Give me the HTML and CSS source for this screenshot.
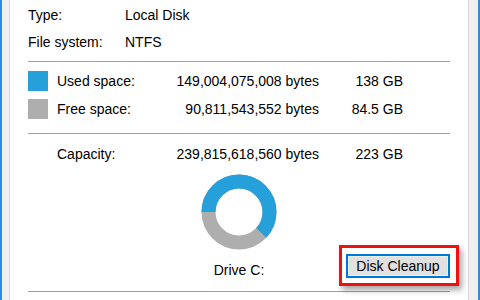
FILE: index.html
```html
<!DOCTYPE html>
<html>
<head>
<meta charset="utf-8">
<link rel="stylesheet" href="styles.css">
</head>
<body>
<div class="window">
  <div class="panel">
    <div class="info">
      <span>Type:</span><span>Local Disk</span>
      <span>File system:</span><span>NTFS</span>
    </div>
    <div class="sep sep-a"></div>
    <div class="usage">
      <span class="swatch used"></span><span>Used space:</span><span class="num">149,004,075,008 bytes</span><span class="num">138 GB</span>
      <span class="swatch free"></span><span>Free space:</span><span class="num">90,811,543,552 bytes</span><span class="num">84.5 GB</span>
    </div>
    <div class="sep sep-b"></div>
    <div class="usage capacity">
      <span></span><span>Capacity:</span><span class="num">239,815,618,560 bytes</span><span class="num">223 GB</span>
    </div>
    <div class="chart">
      <svg width="76" height="76" viewBox="0 0 76 76">
        <circle cx="38" cy="38" r="30.5" fill="none" stroke="#aeaeae" stroke-width="14"/>
        <circle cx="38" cy="38" r="30.5" fill="none" stroke="#26a0da" stroke-width="14" stroke-dasharray="118.6 200" transform="rotate(180 38 38)"/>
      </svg>
    </div>
    <div class="drive-row">
      <span></span>
      <span class="drive">Drive C:</span>
      <span class="btn-wrap"><button class="btn">Disk Cleanup</button></span>
    </div>
    <div class="sep sep-c"></div>
  </div>
</div>
</body>
</html>
```
FILE: styles.css
```css
html, body {
  margin: 0;
  padding: 0;
  background: #ffffff;
}
body {
  font-family: "Liberation Sans", Arial, sans-serif;
  font-size: 14px;
  color: #000000;
}
.window {
  width: 480px;
  height: 300px;
  box-sizing: border-box;
  border-left: 2px solid #2f8ae0;
  border-right: 2px solid #2f8ae0;
  background: #f0f0f0;
  padding: 0 9px 0 7px;
  overflow: hidden;
}
.panel {
  height: 300px;
  box-sizing: border-box;
  background: #ffffff;
  border-left: 1px solid #d9d9d9;
  border-right: 1px solid #d9d9d9;
  padding: 6px 18px 0 18px;
}
.info {
  display: grid;
  grid-template-columns: 97px 1fr;
  grid-auto-rows: 18px;
  row-gap: 9px;
  line-height: 18px;
}
.sep {
  height: 1px;
  background: #a0a0a0;
}
.sep-a { margin-top: 10px; }
.sep-b { margin-top: 14px; }
.sep-c { margin-top: 12px; }
.usage {
  margin-top: 9px;
  display: grid;
  grid-template-columns: 29px 98px 164px 84px;
  grid-auto-rows: 20px;
  row-gap: 8px;
  line-height: 20px;
  align-items: center;
}
.capacity {
  margin-top: 11px;
  grid-auto-rows: 18px;
  line-height: 18px;
}
.swatch {
  width: 20px;
  height: 20px;
}
.used { background: #26a0da; }
.free { background: #aeaeae; }
.num { text-align: right; }
.chart {
  margin-top: 11px;
  height: 76px;
  display: flex;
  justify-content: center;
}
.chart svg { display: block; }
.drive-row {
  margin-top: 4px;
  height: 25px;
  display: grid;
  grid-template-columns: 1fr auto 1fr;
}
.drive {
  align-self: end;
  line-height: 18px;
}
.btn-wrap {
  justify-self: end;
  align-self: start;
  position: relative;
  display: block;
}
.btn-wrap::after {
  content: "";
  position: absolute;
  left: -7px;
  right: -9px;
  top: -9px;
  bottom: -8px;
  border: 3px solid #ee1111;
  box-shadow: 3px 4px 6px rgba(0, 0, 0, 0.35), inset 0 0 0 2px #ffffff;
  pointer-events: none;
}
.btn {
  display: block;
  width: 104px;
  height: 24px;
  box-sizing: border-box;
  margin: 0;
  padding: 0;
  border: 2px solid #0078d7;
  background: #e1e1e1;
  font-family: "Liberation Sans", Arial, sans-serif;
  font-size: 14px;
  color: #000000;
  box-shadow: inset 0 0 0 1px #e9eef3;
}
```
